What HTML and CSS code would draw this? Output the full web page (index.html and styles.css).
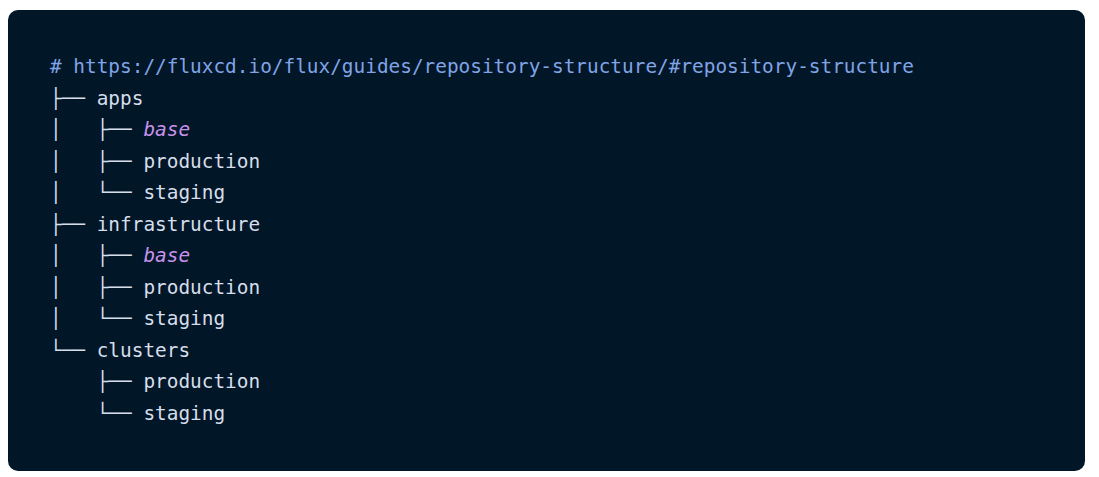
FILE: index.html
```html
<!DOCTYPE html>
<html lang="en">
<head>
<meta charset="utf-8">
<title>Repository structure</title>
<link rel="stylesheet" href="styles.css">
</head>
<body>
<div class="code-block">
<pre class="code"><span class="comment"># https://fluxcd.io/flux/guides/repository-structure/#repository-structure</span>
├── apps
│   ├── <span class="kw">base</span>
│   ├── production
│   └── staging
├── infrastructure
│   ├── <span class="kw">base</span>
│   ├── production
│   └── staging
└── clusters
    ├── production
    └── staging</pre>
</div>
</body>
</html>
```
FILE: styles.css
```css
html, body {
  background: #ffffff;
}
body {
  margin: 10px 8px 8px 8px;
}
.code-block {
  width: 1077px;
  height: 461px;
  box-sizing: border-box;
  background: #011627;
  border-radius: 10px;
  padding: 41px 42px;
}
.code {
  margin: 0;
  font-family: "DejaVu Sans Mono", "Liberation Mono", monospace;
  font-size: 19.4px;
  line-height: 31.5px;
  color: #d6deeb;
  white-space: pre;
}
.comment {
  color: #80a4e6;
}
.kw {
  color: #c792ea;
  font-style: italic;
}
```
